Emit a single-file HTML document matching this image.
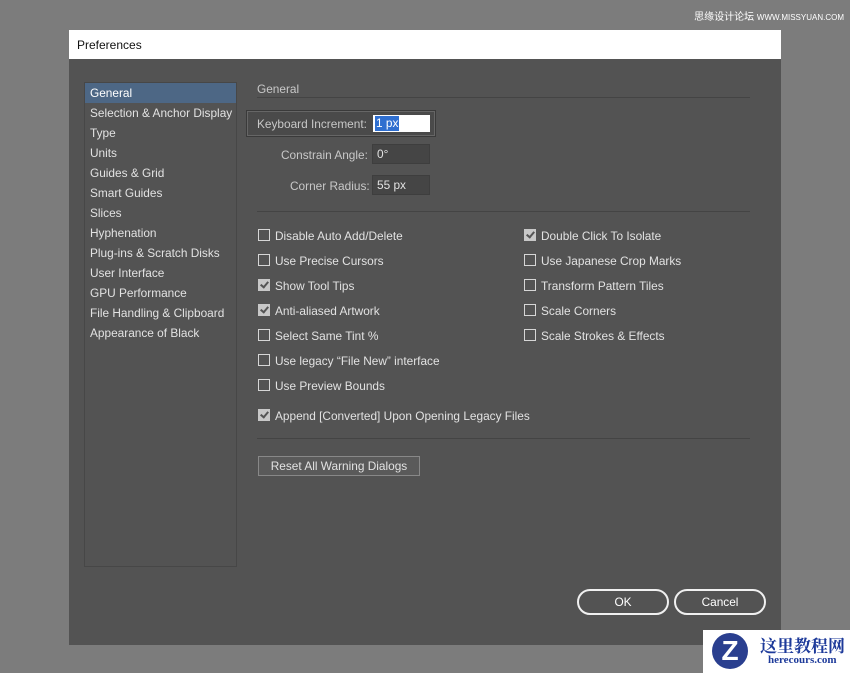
<!DOCTYPE html><html><head><style>
body{margin:0;width:850px;height:673px;background:#7c7c7c;position:relative;overflow:hidden;font-family:"Liberation Sans",sans-serif;font-size:11.85px;color:#e2e2e2}
.a{position:absolute}
.dlg{left:69px;top:30px;width:712px;height:615px;background:#535353}
.title{left:69px;top:30px;width:712px;height:29px;background:#fff;color:#111;font-size:12px}
.side{left:84px;top:82px;width:151px;height:483px;border:1px solid #474747;background:#535353}
.side div{height:20px;line-height:20px;padding-left:5px;white-space:nowrap}
.sel{background:#4d6785;color:#fff}
.cb{position:absolute;width:10px;height:10px;border:1px solid #d6d6d6}
.cb.on{background:#c8c8c8;border-color:#c8c8c8}
.cb.on:after{content:"";position:absolute;left:3px;top:0px;width:3px;height:6px;border:solid #555;border-width:0 2px 2px 0;transform:rotate(40deg)}
.lb{position:absolute;white-space:nowrap}
.inp{position:absolute;background:#454545;border:1px solid #3e3e3e;line-height:18px;padding-left:4px;box-sizing:border-box;height:20px}
.btn{position:absolute;border:2px solid #f0f0f0;border-radius:13px;width:88px;height:22px;text-align:center;line-height:22px;color:#fff}
</style></head><body>
<div class="a" style="right:6px;top:8px;font-size:10px;color:#fff;font-family:'Liberation Sans','Noto Sans CJK SC',sans-serif">思缘设计论坛 <span style="font-size:8px">WWW.MISSYUAN.COM</span></div>
<div class="a dlg"></div>
<div class="a title"><span class="a" style="left:8px;top:8px">Preferences</span></div>
<div class="a side">
<div class="sel">General</div><div>Selection &amp; Anchor Display</div><div>Type</div><div>Units</div><div>Guides &amp; Grid</div><div>Smart Guides</div><div>Slices</div><div>Hyphenation</div><div>Plug-ins &amp; Scratch Disks</div><div>User Interface</div><div>GPU Performance</div><div>File Handling &amp; Clipboard</div><div>Appearance of Black</div>
</div>
<div class="lb" style="left:257px;top:82px;color:#c8c8c8">General</div>
<div class="a" style="left:257px;top:97px;width:493px;height:1px;background:#444"></div>
<div class="a" style="left:246px;top:110px;width:188px;height:25px;border:1px solid #3a3a3a;background:#4a4a4a;box-shadow:inset 0 0 0 1px #666"></div>
<div class="lb" style="left:257px;top:117px;color:#c8c8c8">Keyboard Increment:</div>
<div class="a" style="left:373px;top:115px;width:57px;height:17px;background:#fff"></div>
<div class="a" style="left:375px;top:116px;background:#2f6fd0;color:#fff;padding:0 1px;line-height:15px">1 px</div>
<div class="lb" style="left:281px;top:148px;color:#c8c8c8">Constrain Angle:</div>
<div class="inp" style="left:372px;top:144px;width:58px">0°</div>
<div class="lb" style="left:290px;top:179px;color:#c8c8c8">Corner Radius:</div>
<div class="inp" style="left:372px;top:175px;width:58px">55 px</div>
<div class="a" style="left:257px;top:211px;width:493px;height:1px;background:#444"></div>
<div class="cb" style="left:258px;top:229px"></div><div class="lb" style="left:275px;top:229px">Disable Auto Add/Delete</div>
<div class="cb" style="left:258px;top:254px"></div><div class="lb" style="left:275px;top:254px">Use Precise Cursors</div>
<div class="cb on" style="left:258px;top:279px"></div><div class="lb" style="left:275px;top:279px">Show Tool Tips</div>
<div class="cb on" style="left:258px;top:304px"></div><div class="lb" style="left:275px;top:304px">Anti-aliased Artwork</div>
<div class="cb" style="left:258px;top:329px"></div><div class="lb" style="left:275px;top:329px">Select Same Tint %</div>
<div class="cb" style="left:258px;top:354px"></div><div class="lb" style="left:275px;top:354px">Use legacy “File New” interface</div>
<div class="cb" style="left:258px;top:379px"></div><div class="lb" style="left:275px;top:379px">Use Preview Bounds</div>
<div class="cb on" style="left:258px;top:409px"></div><div class="lb" style="left:275px;top:409px">Append [Converted] Upon Opening Legacy Files</div>
<div class="cb on" style="left:524px;top:229px"></div><div class="lb" style="left:541px;top:229px">Double Click To Isolate</div>
<div class="cb" style="left:524px;top:254px"></div><div class="lb" style="left:541px;top:254px">Use Japanese Crop Marks</div>
<div class="cb" style="left:524px;top:279px"></div><div class="lb" style="left:541px;top:279px">Transform Pattern Tiles</div>
<div class="cb" style="left:524px;top:304px"></div><div class="lb" style="left:541px;top:304px">Scale Corners</div>
<div class="cb" style="left:524px;top:329px"></div><div class="lb" style="left:541px;top:329px">Scale Strokes &amp; Effects</div>
<div class="a" style="left:257px;top:438px;width:493px;height:1px;background:#444"></div>
<div class="a" style="left:258px;top:456px;width:160px;height:18px;border:1px solid #888;background:#5a5a5a;text-align:center;line-height:18px">Reset All Warning Dialogs</div>
<div class="btn" style="left:577px;top:589px">OK</div>
<div class="btn" style="left:674px;top:589px">Cancel</div>
<div class="a" style="left:703px;top:630px;width:147px;height:43px;background:#fff"></div>
<div class="a" style="left:712px;top:633px;width:36px;height:36px;border-radius:50%;background:#2a3f8f;color:#fff;font-weight:bold;font-size:28px;text-align:center;line-height:36px">Z</div>
<div class="a" style="left:760px;top:632px;color:#1d3a9a;font-weight:bold;font-size:17px;font-family:'Noto Serif CJK SC',serif">这里教程网</div>
<div class="a" style="left:768px;top:654px;color:#1d3a9a;font-weight:bold;font-size:11px;font-family:'Liberation Serif',serif">herecours.com</div>
</body></html>
